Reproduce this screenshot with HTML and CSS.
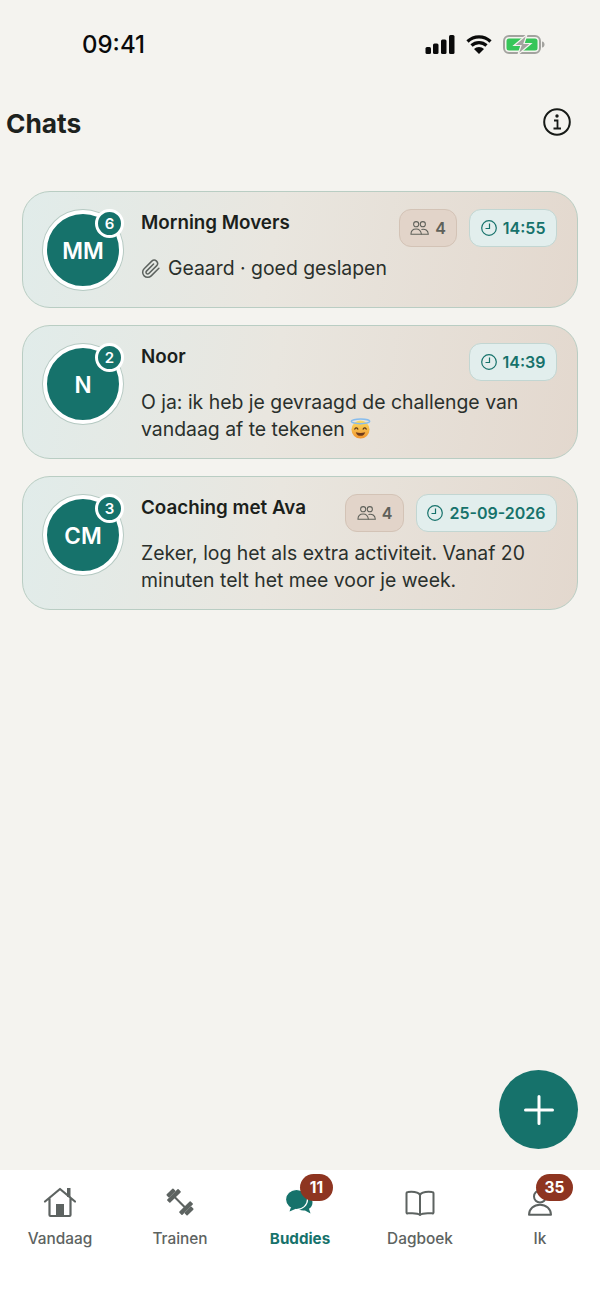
FILE: index.html
```html
<!DOCTYPE html>
<html lang="nl">

<head>
    <meta charset="UTF-8">
    <title>Chats</title>
    <link rel="stylesheet" href="styles.css">
</head>

<body>
    <div class="app">

        <div class="statusbar">
            <span class="clock">09:41</span>
            <div class="status-icons">
                <svg width="30" height="19" viewBox="0 0 30 19">
                    <rect x="0.500" y="12" width="5.500" height="7" rx="1.500" fill="#0a0a0a" />
                    <rect x="8" y="8.500" width="5.500" height="10.500" rx="1.500" fill="#0a0a0a" />
                    <rect x="16" y="4.500" width="5.500" height="14.500" rx="1.500" fill="#0a0a0a" />
                    <rect x="24" y="0" width="5.500" height="19" rx="1.500" fill="#0a0a0a" />
                </svg>
                <svg width="26" height="19" viewBox="0 0 26 19">
                    <path d="M1.500 6.500a16.500 16.500 0 0 1 23 0M5.500 10.500a11 11 0 0 1 15 0" fill="none" stroke="#0a0a0a" stroke-width="3.200" />
                    <path d="M13 19l-5-5a7 7 0 0 1 10 0z" fill="#0a0a0a" />
                </svg>
                <svg width="42" height="19" viewBox="0 0 42 19">
                    <rect x="1" y="1" width="36" height="17" rx="5" fill="none" stroke="#a3a39f" stroke-width="2" />
                    <rect x="3.500" y="3.500" width="31" height="12" rx="2.500" fill="#37c659" />
                    <path d="M39 6.500v6c1.800 0 2.500-1.500 2.500-3s-.7-3-2.500-3z" fill="#a3a39f" />
                    <path d="M24 -0.500L11 10.500h7L15 19.500 28 8.500h-7z" fill="#a3a39f" stroke="#f4f3ef" stroke-width="1.200" />
                </svg>
            </div>
        </div>

        <div class="header">
            <h1>Chats</h1>
            <svg class="info" width="30" height="30" viewBox="0 0 30 30">
                <circle cx="15" cy="15" r="12.800" fill="none" stroke="#171a17" stroke-width="2" />
                <circle cx="15" cy="9" r="1.700" fill="#171a17" />
                <path d="M12 13.500h3.500v8M11.500 21.500h7.500" fill="none" stroke="#171a17" stroke-width="1.800" />
            </svg>
        </div>

        <div class="chat-list">

            <div class="card">
                <div class="avatar">MM<span class="unread">6</span></div>
                <div class="card-body">
                    <div class="card-top">
                        <span class="name">Morning Movers</span>
                        <span class="pill pill-members">
                            <svg class="pill-icon" viewBox="0 0 20 16">
                                <use href="#members" />
                            </svg>4</span>
                        <span class="pill pill-time">
                            <svg class="pill-icon" viewBox="0 0 16 16">
                                <use href="#clock" />
                            </svg>14:55</span>
                    </div>
                    <p class="message">
                        <svg class="clip" width="20" height="20" viewBox="0 0 24 24">
                            <path d="M21.440 11.050l-9.190 9.190a6 6 0 0 1-8.490-8.490l9.190-9.190a4 4 0 0 1 5.660 5.660l-9.200 9.190a2 2 0 0 1-2.830-2.830l8.490-8.480" fill="none" stroke="#5c625e" stroke-width="1.800" stroke-linecap="round" stroke-linejoin="round" />
                        </svg>Geaard · goed geslapen
                    </p>
                </div>
            </div>

            <div class="card">
                <div class="avatar">N<span class="unread">2</span></div>
                <div class="card-body">
                    <div class="card-top">
                        <span class="name">Noor</span>
                        <span class="pill pill-time">
                            <svg class="pill-icon" viewBox="0 0 16 16">
                                <use href="#clock" />
                            </svg>14:39</span>
                    </div>
                    <p class="message">O ja: ik heb je gevraagd de challenge van vandaag af te tekenen
                        <svg class="emoji" width="21" height="21" viewBox="0 0 20 20">
                            <defs>
                                <linearGradient id="face" x1="0" y1="0" x2="0" y2="1">
                                    <stop offset="0" stop-color="#fbdc62" />
                                    <stop offset="1" stop-color="#f1952e" />
                                </linearGradient>
                            </defs>
                            <circle cx="10" cy="11" r="8.600" fill="url(#face)" />
                            <ellipse cx="10" cy="3.200" rx="8.800" ry="2.200" fill="none" stroke="#86bcee" stroke-width="1.400" />
                            <path d="M4.500 10.500q1.500-2 3 0M12.500 10.500q1.500-2 3 0" fill="none" stroke="#5b3a1c" stroke-width="1.200" stroke-linecap="round" />
                            <path d="M5.500 13.500q4.500 1.500 9 0-1 3.500-4.500 3.500t-4.500-3.500z" fill="#6e3b1c" />
                        </svg>
                    </p>
                </div>
            </div>

            <div class="card">
                <div class="avatar">CM<span class="unread">3</span></div>
                <div class="card-body">
                    <div class="card-top">
                        <span class="name">Coaching met Ava</span>
                        <span class="pill pill-members">
                            <svg class="pill-icon" viewBox="0 0 20 16">
                                <use href="#members" />
                            </svg>4</span>
                        <span class="pill pill-time">
                            <svg class="pill-icon" viewBox="0 0 16 16">
                                <use href="#clock" />
                            </svg>25-09-2026</span>
                    </div>
                    <p class="message">Zeker, log het als extra activiteit. Vanaf 20 minuten telt het mee voor je week.</p>
                </div>
            </div>

        </div>

        <div class="fab">
            <svg width="34" height="34" viewBox="0 0 34 34">
                <path d="M17 3.500v27M3.500 17h27" stroke="#fff" stroke-width="3" stroke-linecap="round" />
            </svg>
        </div>

        <div class="tabbar">
            <div class="tab">
                <svg class="tab-icon" width="34" height="32" viewBox="0 0 34 32">
                    <path d="M2 15.500L17 3l15 12.500M6.500 12.500v16.500a1 1 0 0 0 1 1h19a1 1 0 0 0 1-1V12.500" fill="none" stroke="#5d6361" stroke-width="2.200" stroke-linecap="round" stroke-linejoin="round" />
                    <rect x="13" y="18" width="8" height="12" fill="#5d6361" />
                    <rect x="24" y="2" width="3.500" height="9" fill="#5d6361" />
                </svg>
                Vandaag
            </div>
            <div class="tab">
                <svg class="tab-icon" width="34" height="32" viewBox="0 0 34 32">
                    <g fill="#5d6361" transform="rotate(45 17 16) translate(17 16) scale(.8) translate(-17 -16)">
                        <rect x="6" y="15" width="22" height="2.600" />
                        <rect x="3.500" y="6" width="5.500" height="20" rx="1" />
                        <rect x="-1.500" y="10" width="5" height="12" rx="1" />
                        <rect x="25" y="6" width="5.500" height="20" rx="1" />
                        <rect x="30.500" y="10" width="5" height="12" rx="1" />
                    </g>
                </svg>
                Trainen
            </div>
            <div class="tab tab-active">
                <svg class="tab-icon" width="34" height="32" viewBox="0 0 34 32">
                    <path d="M20 9c5-1 9.500 2.500 9.500 7.500 0 3-1.500 5-3.500 6.300l1.500 4.700-5.500-3c-4 .5-7-1-8.500-3z" fill="#16726b" />
                    <ellipse cx="13.500" cy="13.500" rx="11" ry="10" fill="#16726b" stroke="#fff" stroke-width="1.200" />
                    <path d="M8 21l-1.500 4.500 7-3z" fill="#16726b" />
                </svg>
                Buddies
                <span class="count">11</span>
            </div>
            <div class="tab">
                <svg class="tab-icon" width="34" height="32" viewBox="0 0 34 32">
                    <path d="M17 9C15.500 6 11 5.500 5 6a1.500 1.500 0 0 0-1.500 1.500v19c0 .5.500 1 1 .9C9.500 27 14.500 26.500 17 29c2.500-2.500 7.500-2 12.500-1.600.5.100 1-.4 1-.9v-19A1.500 1.500 0 0 0 29 6C23 5.500 18.500 6 17 9zM17 9v20" fill="none" stroke="#5d6361" stroke-width="2" stroke-linejoin="round" />
                </svg>
                Dagboek
            </div>
            <div class="tab">
                <svg class="tab-icon" width="34" height="32" viewBox="0 0 34 32">
                    <circle cx="17" cy="10.500" r="6" fill="none" stroke="#5d6361" stroke-width="2" />
                    <path d="M6 28.800c0-6 5-10 11-10s11 4 11 10z" fill="none" stroke="#5d6361" stroke-width="2" stroke-linejoin="round" />
                </svg>
                Ik
                <span class="count count-wide">35</span>
            </div>
        </div>

    </div>

    <svg class="defs" width="0" height="0">
        <symbol id="members" viewBox="0 0 20 16">
            <g fill="none" stroke="currentColor" stroke-width="1.100">
                <circle cx="6.500" cy="4" r="2.700" />
                <circle cx="13.500" cy="4" r="2.700" />
                <path d="M1 14.500c0-3.500 2.500-5.500 5.500-5.500s5 1.500 5.500 5.500z" />
                <path d="M12 9.500c4-1 7 1 7.300 5h-7.300" />
            </g>
        </symbol>
        <symbol id="clock" viewBox="0 0 16 16">
            <g fill="none" stroke="currentColor" stroke-width="1.200">
                <circle cx="8" cy="8" r="7.300" />
                <path d="M8.500 3.500v5h-4" />
            </g>
        </symbol>
    </svg>
</body>

</html>
```

FILE: styles.css
```css
* {
    box-sizing: border-box;
}

body {
    margin: 0;
    background-color: #f4f3ef;
    font-family: "Inter", "Liberation Sans", sans-serif;
    color: #1b211e;
}

.app {
    position: relative;
    width: 600px;
    height: 1304px;
    display: flex;
    flex-direction: column;
    overflow: hidden;
}

.statusbar {
    height: 70px;
    padding: 19px 55px 0 82px;
    display: flex;
    justify-content: space-between;
    align-items: center;
}

.clock {
    font-size: 24px;
    font-weight: 500;
    color: #0a0a0a;
}

.status-icons {
    display: flex;
    align-items: center;
    gap: 11px;
}

.header {
    height: 106px;
    padding: 0 28px 0 6px;
    display: flex;
    justify-content: space-between;
    align-items: center;
}

.header h1 {
    margin: 0;
    font-size: 26.300px;
    font-weight: 700;
    color: #1d221e;
}

.info {
    margin-top: -2px;
}

.chat-list {
    margin-top: 15px;
    padding: 0 22px;
    display: flex;
    flex-direction: column;
    gap: 17px;
    flex: 1;
}

.card {
    display: flex;
    gap: 18px;
    padding: 17px 20px 15px 20px;
    border: 1.500px solid #b9cdc3;
    border-radius: 28px;
    background: linear-gradient(100deg, #e1ecea 0%, #e9e6df 45%, #e3d8ce 100%);
}

.avatar {
    position: relative;
    flex: none;
    width: 80px;
    height: 80px;
    margin: 1px 0 2px;
    border-radius: 50%;
    background-color: #16726b;
    border: 4px solid #fff;
    box-shadow: 0 0 0 1px #b5c9c2;
    display: flex;
    align-items: center;
    justify-content: center;
    color: #fff;
    font-size: 22.500px;
    font-weight: 600;
}

.unread {
    position: absolute;
    top: -5px;
    right: -5px;
    width: 29px;
    height: 29px;
    border: 3px solid #fff;
    border-radius: 50%;
    background-color: #16726b;
    display: flex;
    align-items: center;
    justify-content: center;
    font-size: 15px;
    font-weight: 600;
}

.card-body {
    flex: 1;
    min-width: 0;
}

.card-top {
    display: flex;
    align-items: flex-start;
    gap: 12px;
    height: 38px;
}

.name {
    margin-right: auto;
    padding-top: 2px;
    font-size: 18.800px;
    font-weight: 600;
    color: #1b1f1c;
}

.pill {
    height: 38px;
    padding: 0 10.500px;
    display: flex;
    align-items: center;
    gap: 6px;
    border-radius: 12px;
    font-size: 16px;
    font-weight: 600;
}

.pill-icon {
    height: 16px;
    width: 16px;
}

.pill-members {
    background-color: #e2d4c9;
    border: 1px solid #d3c3b6;
    color: #5f615a;
}

.pill-members .pill-icon {
    width: 19px;
}

.pill-time {
    background-color: #e2eeed;
    border: 1px solid #c2d6d2;
    color: #16726b;
}

.message {
    margin: 8px 0 0;
    font-size: 19.400px;
    line-height: 27px;
    color: #2a302c;
}

.clip {
    vertical-align: -4px;
    margin-right: 7px;
}

.emoji {
    vertical-align: -3px;
}

.defs {
    position: absolute;
}

.fab {
    position: absolute;
    left: 499px;
    top: 1070px;
    width: 79px;
    height: 79px;
    border-radius: 50%;
    background-color: #16726b;
    display: flex;
    align-items: center;
    justify-content: center;
}

.tabbar {
    height: 134px;
    padding-top: 16px;
    background-color: #fff;
    display: flex;
    align-items: flex-start;
}

.tab {
    position: relative;
    flex: 1;
    display: flex;
    flex-direction: column;
    align-items: center;
    gap: 11px;
    font-size: 15.400px;
    font-weight: 500;
    color: #5d6361;
}

.tab-active {
    font-size: 15.200px;
    font-weight: 700;
    color: #16726b;
}

.count {
    position: absolute;
    top: -12px;
    left: 60px;
    width: 33px;
    height: 27px;
    border-radius: 14px;
    background-color: #8e3521;
    display: flex;
    align-items: center;
    justify-content: center;
    color: #fff;
    font-size: 15.500px;
    font-weight: 700;
}

.count-wide {
    left: 56px;
    width: 37px;
}
```
